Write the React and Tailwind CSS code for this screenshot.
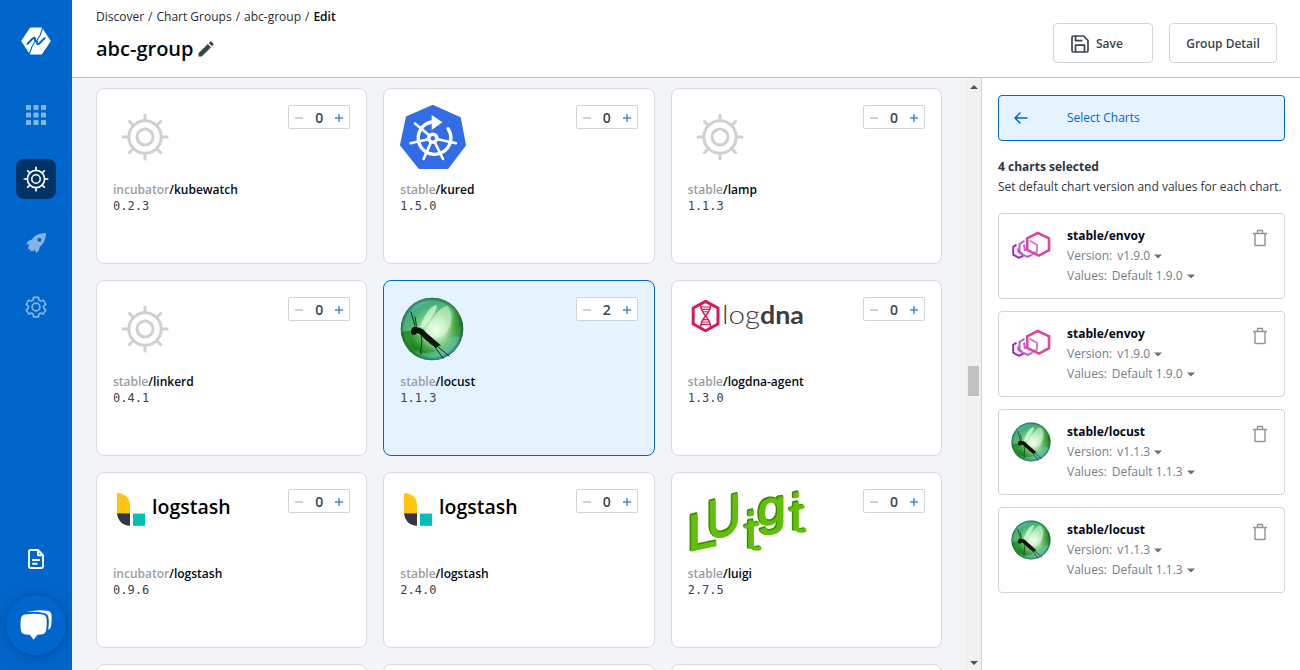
import React from "react";

const spokes = [0, 45, 90, 135, 180, 225, 270, 315];

function Helm({ className, ring = 3, inner = 3 }) {
  return (
    <svg viewBox="0 0 64 64" className={className} fill="none" stroke="currentColor" strokeLinecap="round">
      <circle cx="32" cy="32" r="16.2" strokeWidth={ring} />
      <circle cx="32" cy="32" r="8" strokeWidth={inner} />
      {spokes.map((a) => (
        <path key={a} d="M32 15.5V10" strokeWidth={ring} transform={`rotate(${a} 32 32)`} />
      ))}
    </svg>
  );
}

function Kured() {
  return (
    <svg viewBox="0 0 66 64" className="h-16 w-[66px] max-w-none">
      <path
        d="M32.8 1.2 L59.6 13 L64.8 40 L47.6 62.8 H19.4 L1.2 40 L7 12.4 Z"
        fill="#326de6"
        stroke="#326de6"
        strokeWidth="2.4"
        strokeLinejoin="round"
      />
      <g fill="none" stroke="#fff" strokeLinecap="round">
        <path d="M48 23.8 A16.3 16.3 0 1 1 31.5 17" strokeWidth="3.4" />
        <path d="M32.8 33.3 L10.5 38.3 M32.8 33.3 L56 38.3 M32.8 33.3 L23.6 54 M32.8 33.3 L43 54 M32.8 33.3 L15 18.5" strokeWidth="2.6" />
      </g>
      <path d="M31.7 10 L42.5 17.3 L31.7 25 Z" fill="#fff" />
      <circle cx="32.8" cy="33.2" r="5.8" fill="#fff" />
      <circle cx="32.8" cy="33.2" r="2.2" fill="#326de6" />
    </svg>
  );
}

function Locust({ className, id }) {
  return (
    <svg viewBox="0 0 64 64" className={className}>
      <defs>
        <linearGradient id={`${id}-ball`} x1="0.15" y1="0" x2="0.7" y2="1">
          <stop offset="0" stopColor="#6fd3d6" />
          <stop offset="0.2" stopColor="#45ad80" />
          <stop offset="0.5" stopColor="#5fbf62" />
          <stop offset="0.66" stopColor="#2a9a24" />
          <stop offset="0.84" stopColor="#4cb184" />
          <stop offset="1" stopColor="#62cdc4" />
        </linearGradient>
        <radialGradient id={`${id}-glow`} cx="0.56" cy="0.52" r="0.42">
          <stop offset="0" stopColor="#fbfff8" />
          <stop offset="0.4" stopColor="#c9f3c2" stopOpacity="0.8" />
          <stop offset="1" stopColor="#7ad47a" stopOpacity="0" />
        </radialGradient>
        <radialGradient id={`${id}-edge`} cx="0.5" cy="0.5" r="0.5">
          <stop offset="0.88" stopColor="#063d12" stopOpacity="0" />
          <stop offset="1" stopColor="#063d22" stopOpacity="0.6" />
        </radialGradient>
      </defs>
      <circle cx="32" cy="32" r="31.3" fill={`url(#${id}-ball)`} />
      <path d="M1 36 C8 32 14 34 20 39 L36 54 C22 60 4 52 1 36Z" fill="#0c7a10" opacity="0.6" />
      <path d="M53 12 C62 20 64 32 61 40 C54 38 49 42 45 41 C53 32 55 22 53 12Z" fill="#0f6a1a" opacity="0.4" />
      <circle cx="32" cy="32" r="31" fill={`url(#${id}-glow)`} />
      <path d="M20 30 C25 16 31 9 36 8 C39 10 33 19 24 31Z" fill="#e5ffe8" opacity="0.65" />
      <path d="M25 34 C34 18 42 8 48 9 C54 17 52 32 44 38 C37 44 30 40 25 34Z" fill="#e8ffe6" opacity="0.5" />
      <circle cx="32" cy="32" r="31.3" fill={`url(#${id}-edge)`} />
      <path d="M11 34.5 C11 30 15 28.5 18 30.5 C22 31 24 33 26.5 36 L34 42.5 L37 45 L41 48.5 L38 49 L36.500 51 L31 47.500 L24 41.500 L20 37.500 L17 36 C14 39.500 11 38 11 34.500Z" fill="#0d130e" />
      <path d="M15 29 L11 15 M16.5 29 L15 20 M21 39 C23.5 45 20 51 21 57 M33 47.5 L43 61 M37 49 L49 59" fill="none" stroke="#10180f" strokeWidth="0.9" strokeLinecap="round" />
    </svg>
  );
}

function LogDna() {
  return (
    <svg viewBox="0 0 120 64" className="h-16 w-[120px]">
      <path d="M17.6 4.4 L30 11 V27 L17.6 33.7 L5.2 27 V11 Z" fill="none" stroke="#d6185c" strokeWidth="3" strokeLinejoin="round" />
      <g fill="none" stroke="#d6185c">
        <path d="M12.6 8 C12.6 18 22.6 19.5 22.6 30 M22.6 8 C22.6 18 12.6 19.5 12.6 30" strokeWidth="1.5" />
        <path d="M13 10 H22.3 M13.5 12.4 H21.7 M14.6 14.8 H20.6 M14.8 22.6 H20.4 M13.6 25 H21.5 M13 27.4 H22.3" strokeWidth="1.1" />
      </g>
      <text x="34" y="26.6" textLength="38" lengthAdjust="spacingAndGlyphs" className="font-['Lato'] text-[25px] font-light" fill="#3d3d3f">log</text>
      <text x="72" y="26.6" textLength="44" lengthAdjust="spacingAndGlyphs" className="font-['Lato'] text-[25px] font-bold" fill="#3d3d3f">dna</text>
    </svg>
  );
}

function Logstash() {
  return (
    <svg viewBox="0 0 120 64" className="h-16 w-[120px]">
      <path d="M4 4 C12 4 17 9 17 16 V24.3 H4Z" fill="#fec514" />
      <path d="M4 24.3 H17 V36.7 C9.5 36.7 4.6 31.5 4 24.3Z" fill="#343741" />
      <rect x="20" y="24.6" width="12" height="12.2" fill="#00bfb3" />
      <text x="39.1" y="25" textLength="78.5" lengthAdjust="spacingAndGlyphs" className="font-['Open_Sans'] text-[20px] font-semibold" fill="#000">logstash</text>
    </svg>
  );
}

function LuigiLayer() {
  return (
    <>
      <text transform="matrix(1.1 -0.24 0 1.04 -1 62.500)" className="text-[49px]">L</text>
      <text transform="matrix(0.98 -0.27 0 1.15 18.500 51.500)" className="text-[48px]">U</text>
      <text transform="matrix(1 -0.2 0 1.1 57.500 59.500)" className="text-[46px]">i</text>
      <text transform="matrix(1.12 -0.2 0 1.04 69 37.500)" className="text-[46px]">g</text>
      <text transform="matrix(1 -0.2 0 1.1 102.500 41.500)" className="text-[46px]">i</text>
      <path d="M57.5 37.5 L69 34.5 M64 58 Q65.5 60.5 71 59" fill="none" strokeWidth="4" />
      <path d="M102.5 20.5 L114 17.5 M109 40 Q110.5 42.5 116 41" fill="none" strokeWidth="4" />
    </>
  );
}

function Luigi() {
  return (
    <svg viewBox="0 0 120 64" className="h-16 w-[120px] overflow-visible font-['Liberation_Sans']" strokeLinejoin="round" strokeLinecap="round">
      <g fill="#3c8c05" stroke="#3c8c05" strokeWidth="2.4" transform="translate(-0.5 -0.7)" aria-hidden="true">
        <LuigiLayer />
      </g>
      <g fill="#62bf0a" stroke="#62bf0a" strokeWidth="1.4" transform="translate(0.6 0.3)">
        <LuigiLayer />
      </g>
    </svg>
  );
}

function Envoy() {
  return (
    <svg viewBox="0 0 40 40" className="h-10 w-10" fill="none" strokeLinejoin="miter">
      <path d="M5.5 18.7 L2.2 20.8 V28.6 L8 31.8 L12.5 29.5 M7.5 22.5 V25.5 L11 27.5" stroke="#9c2fae" strokeWidth="2" />
      <path d="M13.5 14.8 L8.5 18 V27 L16.5 31 L21 28.8 M13 18.5 L14 25" stroke="#c25ad6" strokeWidth="2" />
      <path d="M18.5 14.5 L26 18.8 V25.5 L20 29" stroke="#d07fe0" strokeWidth="2" />
      <path d="M26.800 7 L38 12.400 V24.200 L28 29.600 L16.200 24 V12.400 Z" stroke="#d9489f" strokeWidth="2.600" />
    </svg>
  );
}

const logos = {
  helm: () => <Helm className="h-16 w-16 text-[#d0d0d0]" />,
  kured: Kured,
  locust: () => <Locust id="card" className="h-16 w-16" />,
  logdna: LogDna,
  logstash: Logstash,
  luigi: Luigi,
};

const charts = [
  { repo: "incubator", name: "kubewatch", version: "0.2.3", logo: "helm", count: 0 },
  { repo: "stable", name: "kured", version: "1.5.0", logo: "kured", count: 0 },
  { repo: "stable", name: "lamp", version: "1.1.3", logo: "helm", count: 0 },
  { repo: "stable", name: "linkerd", version: "0.4.1", logo: "helm", count: 0 },
  { repo: "stable", name: "locust", version: "1.1.3", logo: "locust", count: 2 },
  { repo: "stable", name: "logdna-agent", version: "1.3.0", logo: "logdna", count: 0 },
  { repo: "incubator", name: "logstash", version: "0.9.6", logo: "logstash", count: 0 },
  { repo: "stable", name: "logstash", version: "2.4.0", logo: "logstash", count: 0 },
  { repo: "stable", name: "luigi", version: "2.7.5", logo: "luigi", count: 0 },
];

const selected = [
  { name: "stable/envoy", version: "1.9.0" },
  { name: "stable/envoy", version: "1.9.0" },
  { name: "stable/locust", version: "1.1.3" },
  { name: "stable/locust", version: "1.1.3" },
];

function Stepper({ count }) {
  return (
    <div className="flex h-6 w-[62px] items-center justify-between rounded-xs border border-[#d0d4d9] bg-white px-1.5">
      <svg viewBox="0 0 8 8" className="mt-0.5 h-2 w-2"><path d="M0 4H8" stroke="#b3b6ba" strokeWidth="1.3" /></svg>
      <span className="mt-0.5 text-[14px] leading-5 font-semibold text-[#3b444c]">{count}</span>
      <svg viewBox="0 0 8 8" className="mt-0.5 h-2 w-2"><path d="M0 4H8M4 0V8" stroke="#3b8bd0" strokeWidth="1.4" /></svg>
    </div>
  );
}

function ChartCard({ chart }) {
  const Logo = logos[chart.logo];
  const active = chart.count > 0;
  return (
    <div className={`flex h-44 flex-col rounded-lg border p-4 ${active ? "border-[#0066cc] bg-[#e5f2ff]" : "border-[#d6dbdf] bg-white"}`}>
      <div className="flex h-16 items-start justify-between">
        <Logo />
        <Stepper count={chart.count} />
      </div>
      <div className="mt-[13px] text-[12px] leading-4 font-semibold text-[#000a14]">
        <span className="text-[#999ea3]">{chart.repo}</span>/{chart.name}
      </div>
      <div className="font-['DejaVu_Sans_Mono',monospace] text-[12px] leading-4 text-[#3b444c]">{chart.version}</div>
    </div>
  );
}

function Caret() {
  return (
    <svg viewBox="0 0 8 5" className="ml-1 h-[5px] w-2"><path d="M0 0.5H8L4 4.5Z" fill="#6b7076" /></svg>
  );
}

function SelectedCard({ item, index }) {
  return (
    <div className="flex h-[86px] rounded border border-[#d0d4d9] px-3 pt-3">
      {item.name === "stable/envoy" ? <Envoy /> : <Locust id={`sel${index}`} className="h-10 w-10" />}
      <div className="ml-4 flex-1 text-[12px] leading-5 text-[#767d84]">
        <div className="font-bold text-[#000a14]">{item.name}</div>
        <div className="flex items-center">Version:<span className="ml-[5px]">v{item.version}</span><Caret /></div>
        <div className="flex items-center">Values:<span className="ml-[5px]">Default {item.version}</span><Caret /></div>
      </div>
      <svg viewBox="0 0 16 18" className="mt-[3px] mr-1 h-[18px] w-4" fill="none" stroke="#8e9499" strokeWidth="1.4">
        <path d="M1 4.5H15M5.5 4V1.5H10.5V4M3 4.5V15.9Q3 16.5 3.6 16.5H12.4Q13 16.5 13 15.9V4.5" />
      </svg>
    </div>
  );
}

function Sidebar() {
  return (
    <nav className="flex w-[72px] shrink-0 flex-col items-center bg-[#0066cc]">
      <svg viewBox="0 0 30 28" className="mt-[27px] h-7 w-[30px]">
        <path d="M9.3 1 H20.7 L29.3 14 L20.7 27 H9.3 L0.7 14 Z" fill="#fff" stroke="#fff" strokeWidth="1" strokeLinejoin="round" />
        <g fill="none" stroke="#0066cc" strokeLinecap="round" strokeLinejoin="round">
          <path d="M6.500 16.800 L11.500 11.800 Q14 9.800 14 12 Q13.800 15.200 15 14 Q16.200 12.800 16 16 Q16 18.200 18.500 16.200 L23.500 11.200" strokeWidth="2" />
          <path d="M21.800 0.500 L19 8.500 L16.500 12.500 M8.200 27.500 L11 19.500 L13.500 15.500" strokeWidth="1.100" />
        </g>
      </svg>
      <svg viewBox="0 0 20 20" className="mt-[50px] h-5 w-5" fill="#82b4e6">
        {[0, 7.5, 15].map((y) => [0, 7.5, 15].map((x) => <rect key={`${x}-${y}`} x={x} y={y} width="5" height="5" rx="1" />))}
      </svg>
      <div className="mt-[34px] flex h-10 w-10 items-center justify-center rounded-lg bg-[#003366]">
        <Helm className="h-[34px] w-[34px] text-white" ring={3.2} inner={3} />
      </div>
      <svg viewBox="0 0 20 20" className="mt-[34px] h-5 w-5" fill="#82b4e6">
        <path d="M20 0 C13 0.3 8.5 2.2 6 6.5 L2 8 L0 11.5 L3.4 11.2 L1.6 16.6 L4 15.8 L4.2 18.4 L6 17.6 L7.5 18.8 L8.6 16.6 L10.4 20 L12.8 17.4 L14 13.6 C18 10.6 19.8 6 20 0Z" />
        <circle cx="13.4" cy="6.8" r="2" fill="#1f5a9c" />
      </svg>
      <svg viewBox="0 0 24 24" className="mt-[42px] h-6 w-6" fill="none" stroke="#82b4e6" strokeWidth="1.7" strokeLinejoin="round">
        <path d="M9.6 2.3h4.8l.6 2.7 1.7 1 2.7-.8 2.3 4.1-2 1.8v1.9l2 1.8-2.3 4.1-2.7-.8-1.7 1-.6 2.7H9.6L9 19.1l-1.7-1-2.7.8-2.3-4.1 2-1.8v-1.9l-2-1.8 2.3-4.1 2.7.8 1.7-1z" />
        <circle cx="12" cy="12" r="3.9" />
      </svg>
      <svg viewBox="0 0 16 20" className="mt-[230px] h-5 w-4" fill="none" stroke="#fff" strokeWidth="1.9" strokeLinejoin="round">
        <path d="M1 2.5Q1 1 2.5 1H10L15 6.2V17.5Q15 19 13.5 19H2.5Q1 19 1 17.5ZM10 1V6.2H15M4.2 11H11.8M4.2 14.8H9.4" />
      </svg>
      <div className="mt-[26px] flex h-[60px] w-[60px] shrink-0 items-center justify-center rounded-full bg-[#0066cc] shadow-[0_1px_6px_rgba(0,0,0,0.12),0_2px_24px_rgba(0,0,0,0.16)]">
        <svg viewBox="0 0 32 30" className="h-[30px] w-8" fill="#fff">
          <path d="M5 4.5 Q14 2.8 23 4.5 Q26.3 5 26.6 9 Q27 14 26.3 19.5 Q25.8 23.5 22.5 24.2 L17.5 24.8 L13.6 29.8 L10 25 L4.5 24.2 Q1.2 23.6 0.8 20 Q0.1 14 0.9 8.5 Q1.4 5.2 5 4.5Z" />
          <path d="M6.5 2 Q17 -0.8 27.5 0.8 Q31.2 1.4 31.5 5 Q31.9 11 31 16.5 Q30.5 19 28.2 19.6 Q29.3 12 28.5 7.5 Q27.8 3.4 24 2.9 Q15 1.2 6.5 2Z" />
        </svg>
      </div>
    </nav>
  );
}

function Header() {
  return (
    <header className="flex h-[78px] shrink-0 justify-between border-b border-[#bfc3c8] bg-white pr-[23px] pl-6">
      <div className="pt-[9px]">
        <div className="flex gap-1 text-[12px] leading-4 text-[#1f2a33]">
          <span>Discover</span><span>/</span><span>Chart Groups</span><span>/</span><span>abc-group</span><span>/</span>
          <span className="font-semibold text-[#000a14]">Edit</span>
        </div>
        <div className="mt-[9px] flex items-center text-[20px] leading-[30px] font-semibold text-[#000a14]">
          abc-group
          <svg viewBox="0 0 16 16" className="ml-1 h-4 w-4" fill="#3b444c">
            <path d="M0.5 12.3 L9.8 3 L13 6.2 L3.7 15.5 H0.5Z M10.8 2 L12.3 0.6 Q12.9 0.1 13.5 0.7 L15.3 2.5 Q15.9 3.1 15.3 3.8 L14 5.2Z" />
          </svg>
        </div>
      </div>
      <div className="mt-[23px] flex h-10 gap-4 text-[12px] font-semibold text-[#3b444c]">
        <button className="flex w-[100px] items-center rounded border border-[#d0d4d9] pt-0.5 pl-[17px]">
          <svg viewBox="0 0 18 18" className="mr-[7px] h-[18px] w-[18px]" fill="none" stroke="#3b444c" strokeWidth="1.7" strokeLinejoin="round">
            <path d="M2.5 1H12.5L17 5.5V15.5Q17 17 15.5 17H2.5Q1 17 1 15.5V2.5Q1 1 2.5 1ZM4.5 17V10.2H13.5V17M4.5 1V5.7H11.5" />
          </svg>
          Save
        </button>
        <button className="w-[108px] rounded border border-[#d0d4d9] pt-0.5">Group Detail</button>
      </div>
    </header>
  );
}

function ScrollBar() {
  return (
    <div className="flex w-[15px] shrink-0 flex-col items-center bg-[#f1f1f1]">
      <svg viewBox="0 0 8 4" className="mt-[7px] h-1 w-2"><path d="M0 4L4 0L8 4Z" fill="#505050" /></svg>
      <div className="mt-[277px] h-[30px] w-[11px] bg-[#c1c1c1]" />
      <svg viewBox="0 0 8 4" className="mt-auto mb-[5px] h-1 w-2"><path d="M0 0L4 4L8 0Z" fill="#505050" /></svg>
    </div>
  );
}

export default function App() {
  return (
    <div className="flex h-[670px] w-[1300px] overflow-hidden bg-white font-['Open_Sans',sans-serif]">
      <Sidebar />
      <div className="flex min-w-0 flex-1 flex-col">
        <Header />
        <div className="flex min-h-0 flex-1">
          <main className="grid flex-1 grid-cols-3 content-start gap-4 overflow-hidden bg-[#f2f4f7] px-6 pt-2.5">
            {charts.map((c) => <ChartCard key={c.repo + c.name} chart={c} />)}
            {[0, 1, 2].map((i) => <div key={i} className="h-44 rounded-lg border border-[#d6dbdf] bg-white" />)}
          </main>
          <ScrollBar />
          <aside className="w-[319px] shrink-0 border-l border-[#d0d4d9] bg-white pt-[17px] pr-[15px] pl-4">
            <button className="flex h-[46px] w-full items-center rounded border border-[#0066cc] bg-[#e5f2ff] pl-[15px] text-[12px] text-[#0066cc]">
              <svg viewBox="0 0 14 12" className="mr-[39px] h-3 w-3.5" fill="none" stroke="#0066cc" strokeWidth="1.5" strokeLinecap="round" strokeLinejoin="round">
                <path d="M13 6H1M6 1L1 6L6 11" />
              </svg>
              Select Charts
            </button>
            <div className="mt-4 text-[12px] leading-5 whitespace-nowrap text-[#2c3640]">
              <div className="font-bold">4 charts selected</div>
              <div>Set default chart version and values for each chart.</div>
            </div>
            <div className="mt-4 flex flex-col gap-3">
              {selected.map((s, i) => <SelectedCard key={i} item={s} index={i} />)}
            </div>
          </aside>
        </div>
      </div>
    </div>
  );
}
